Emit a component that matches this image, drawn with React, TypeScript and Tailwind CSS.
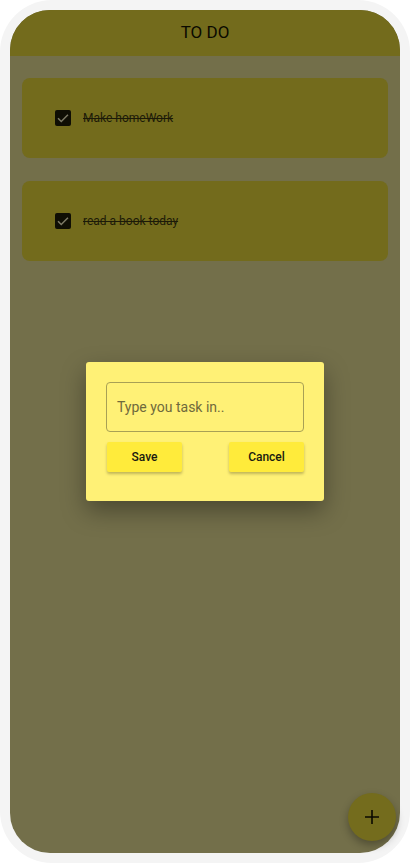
import React from "react";

function Check() {
  return (
    <div className="w-[16px] h-[16px] bg-[#0f0e04] rounded-[2px] flex items-center justify-center">
      <svg width="14" height="14" viewBox="0 0 24 24">
        <path d="M3.5 12.5l5.5 5.5L20.5 6.5" fill="none" stroke="#7d7a66" strokeWidth="2.6" />
      </svg>
    </div>
  );
}

function Card({ text }: { text: string }) {
  return (
    <div className="h-[80px] rounded-[8px] bg-[#736b1c] flex items-center pl-[33px] gap-[12px]">
      <Check />
      <span className="text-[12px] text-[#1c1a08] line-through">{text}</span>
    </div>
  );
}

export default function App() {
  return (
    <div className="w-[410px] h-[864px] bg-white" style={{ fontFamily: "Roboto, 'Noto Sans', sans-serif" }}>
      <div className="h-[863px] bg-[#f4f4f4] rounded-[52px] px-[10px] pt-[10px] pb-[10px]">
        <div className="relative h-full rounded-[40px] bg-[#736f4a] overflow-visible">
          <div className="h-[46px] bg-[#736b1c] rounded-t-[40px] flex items-center justify-center">
            <span className="text-[17px] font-normal text-[#0a0900]">TO DO</span>
          </div>
          <div className="px-[12px] pt-[22px] flex flex-col gap-[23px]">
            <Card text="Make homeWork" />
            <Card text="read a book today" />
          </div>

          <div className="absolute left-[76px] top-[352px] w-[238px] h-[139px] bg-[#fff176] rounded-[3px] shadow-[0_10px_24px_rgba(0,0,0,0.35)] px-[20px] pt-[20px]">
            <div className="h-[50px] border border-[#a8a055] rounded-[4px] flex items-center pl-[10px]">
              <span className="text-[14px] text-[#6f6a3c]">Type you task in..</span>
            </div>
            <div className="mt-[10px] flex justify-between pl-[1px]">
              <div className="w-[75px] h-[30px] bg-[#ffeb3b] rounded-[2px] shadow-[0_2px_3px_rgba(0,0,0,0.25)] flex items-center justify-center text-[12px] font-medium text-[#1a1a10]">Save</div>
              <div className="w-[75px] h-[30px] bg-[#ffeb3b] rounded-[2px] shadow-[0_2px_3px_rgba(0,0,0,0.25)] flex items-center justify-center text-[12px] font-medium text-[#1a1a10]">Cancel</div>
            </div>
          </div>

          <div className="absolute right-[4px] bottom-[12px] w-[48px] h-[48px] rounded-full bg-[#746c1d] shadow-[0_4px_8px_rgba(0,0,0,0.3)] flex items-center justify-center">
            <svg width="14" height="14" viewBox="0 0 14 14">
              <path d="M7 0v14M0 7h14" stroke="#0a0900" strokeWidth="1.6" />
            </svg>
          </div>
        </div>
      </div>
    </div>
  );
}
